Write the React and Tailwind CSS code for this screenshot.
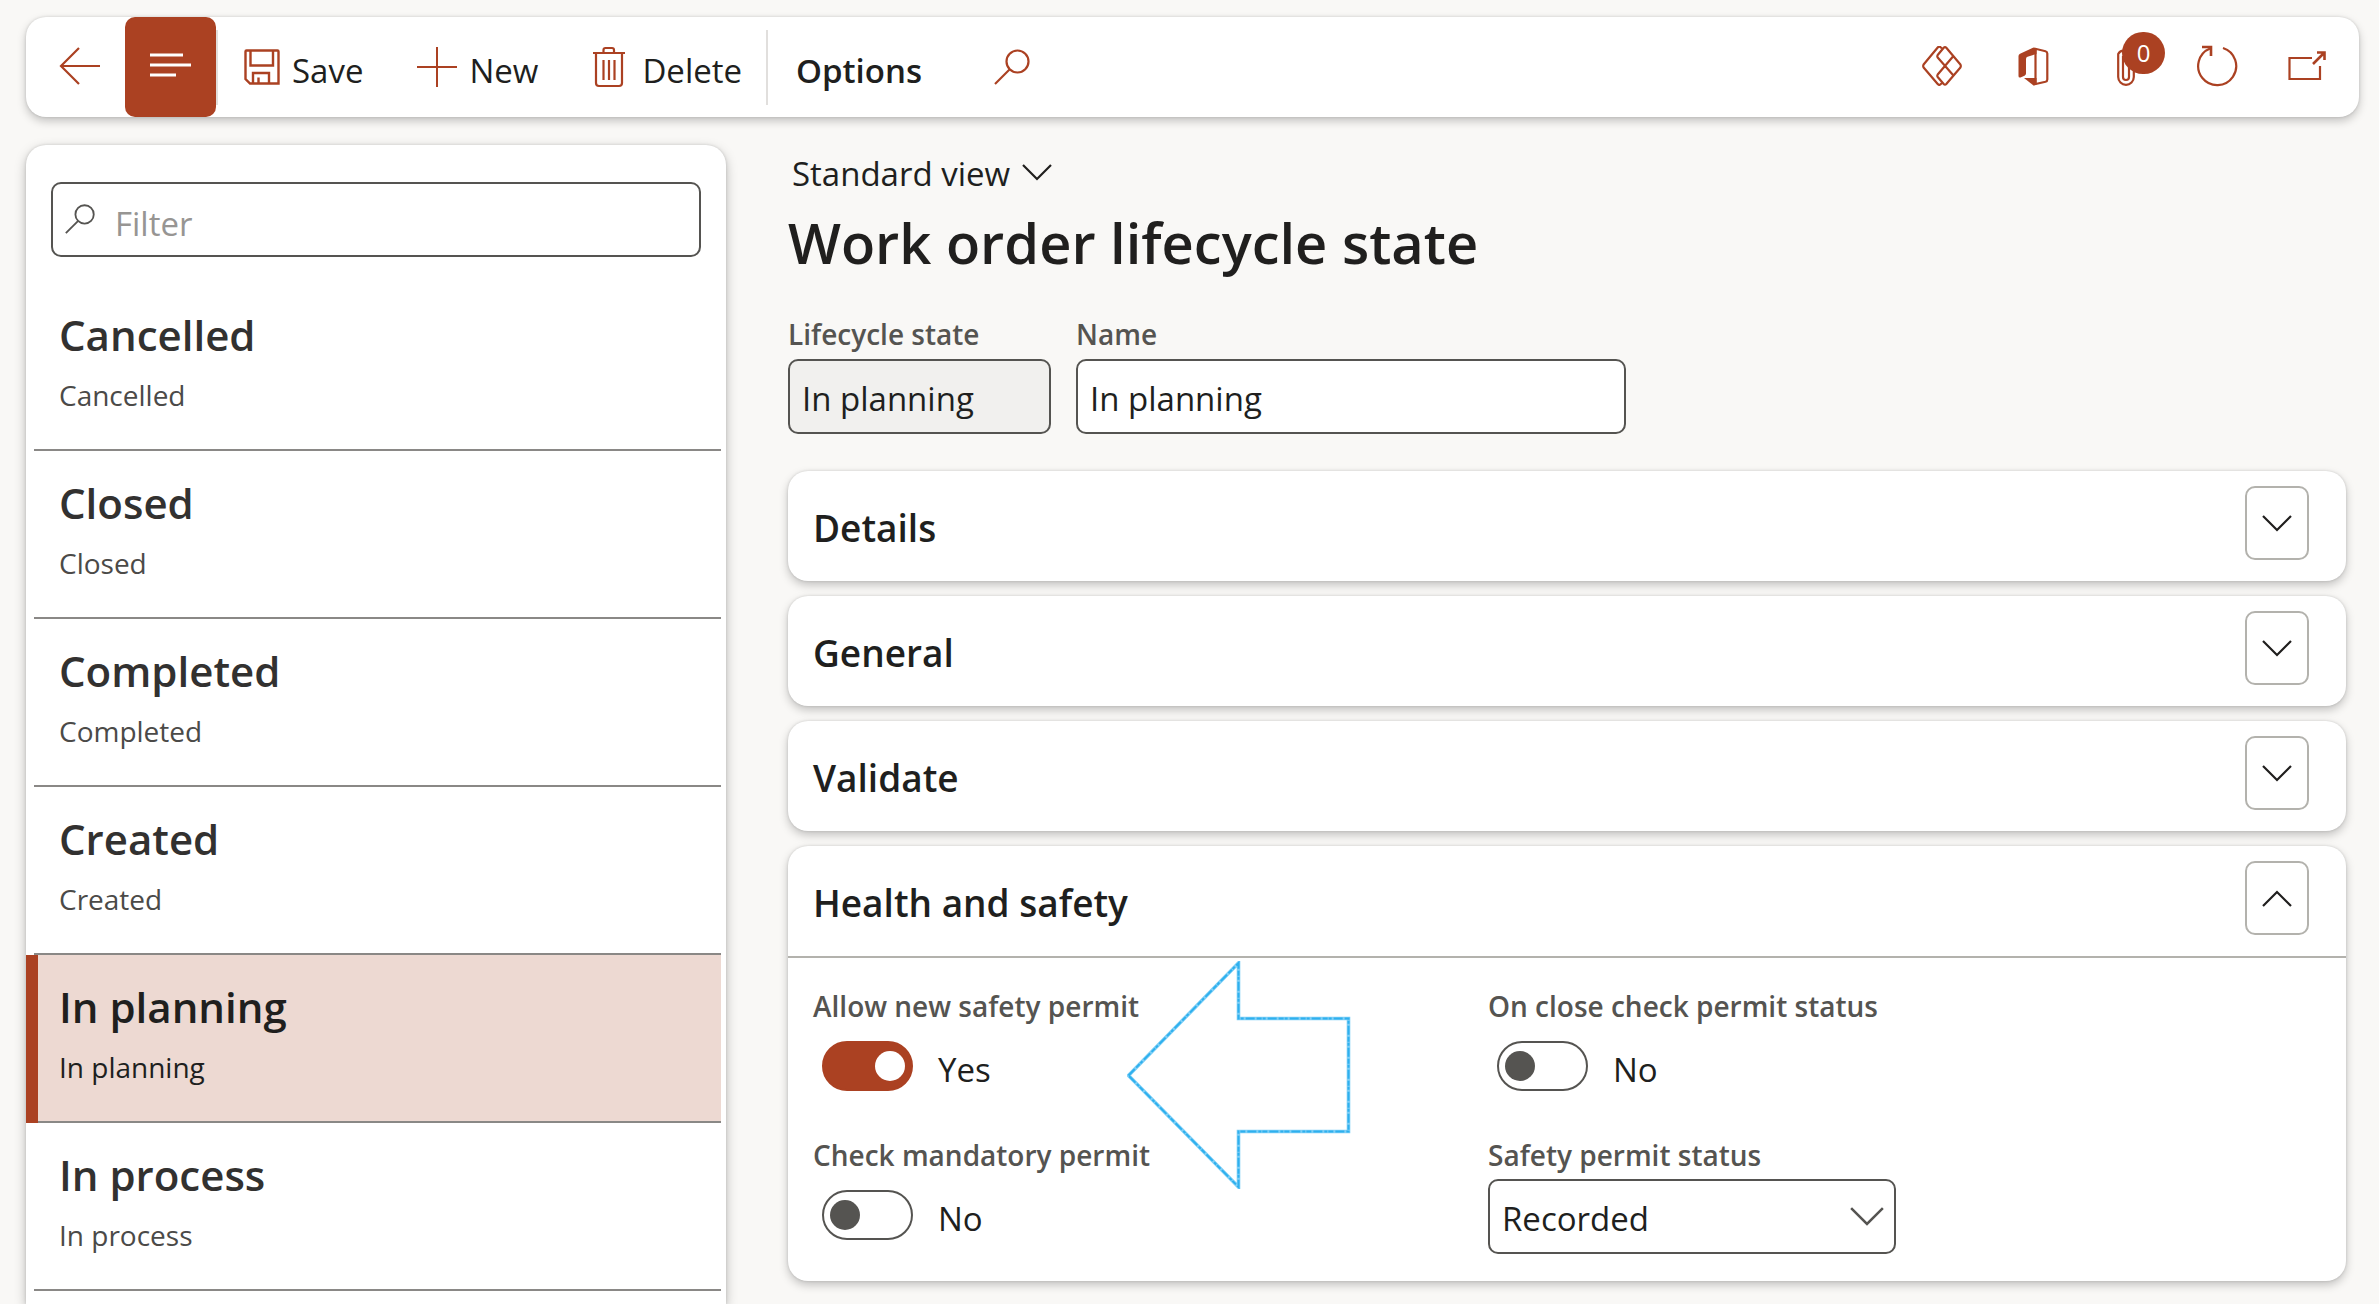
import { useState } from "react";

const ICON = "stroke-[#ab4122] fill-none";

function BackIcon() {
  return (
    <svg width="42" height="40" viewBox="0 0 42 40" className={ICON} strokeWidth="2.2">
      <path d="M20 2 2 20 20 38M2 20H41" />
    </svg>
  );
}

function MenuIcon() {
  return (
    <svg width="42" height="26" viewBox="0 0 42 26" className="fill-none stroke-white" strokeWidth="3">
      <path d="M1 3H34M1 13H42M1 23H27" />
    </svg>
  );
}

function SaveIcon() {
  return (
    <svg width="36" height="36" viewBox="0 0 36 36" className={ICON} strokeWidth="2.4">
      <path d="M1.500 2.500Q1.500 1.500 2.500 1.500H33.500Q34.500 1.500 34.500 2.500V34.500H6L1.500 30Z" />
      <path d="M6.500 2V16.500H29V2M9 34V24H25V34M14.500 34V28.500" />
    </svg>
  );
}

function PlusIcon() {
  return (
    <svg width="40" height="40" viewBox="0 0 40 40" className={ICON} strokeWidth="2">
      <path d="M20 0V40M0 20H40" />
    </svg>
  );
}

function TrashIcon() {
  return (
    <svg width="34" height="42" viewBox="0 0 34 42" className={ICON} strokeWidth="2.200">
      <path d="M1 7H33M11.500 7V4Q11.500 2 13.500 2H20Q22 2 22 4V7M4 7V37Q4 40 7 40H27Q30 40 30 37V7M11.500 14V34M17 14V34M22.500 14V34" />
    </svg>
  );
}

function SearchIcon({ className, size }) {
  return (
    <svg width={size} height={size} viewBox="0 0 36 36" className={className} strokeWidth="2.2">
      <circle cx="23.500" cy="12.500" r="11" />
      <path d="M15.500 20.500 1 35" />
    </svg>
  );
}

function ChevronDown({ className, width = 30 }) {
  return (
    <svg width={width} viewBox="0 0 30 17" className={className} strokeWidth="2.2">
      <path d="M1 1 15 15 29 1" />
    </svg>
  );
}

function DiamondsIcon() {
  return (
    <svg width="40" height="40" viewBox="0 0 40 40" className={ICON} strokeWidth="2.2" strokeLinejoin="round">
      <path d="M20 2.500 18.300 1Q17 .2 15.700 1.500L1.600 18.500Q.8 20 1.600 21.500L15.700 38Q17 39.500 18.300 38.500L20 37" />
      <path d="M21.700 1.800Q23 .4 24.300 1.800L38.400 18.500Q39.200 20 38.400 21.500L24.300 38Q23 39.400 21.700 38L15.700 31Q14.900 29.700 15.700 28.500L31 10.500M31 29 15.700 11.500Q14.900 10.300 15.700 9L21.700 1.800" />
    </svg>
  );
}

function OfficeIcon() {
  return (
    <svg width="31" height="39" viewBox="0 0 31 39">
      <path className="fill-[#ab4122]" d="M15.500 .5 18.500 1.500V7L9.500 9.700Q8 10.200 8 12V26.500Q8 28 6.500 28.800L2.500 30.500Q.5 31 .5 29V9Q.5 7.500 2 6.800Z" />
      <path className="fill-[#ab4122]" d="M6 31H18.500V37.500L15.500 38.500Z" />
      <path className={ICON} strokeWidth="2.200" d="M17.500 37V1.800L27.500 4.200Q29.300 4.700 29.300 6.500V32.500Q29.300 34.300 27.500 34.800L15.500 37.500" />
    </svg>
  );
}

function PaperclipIcon() {
  return (
    <svg width="18" height="40" viewBox="0 0 18 40" className={ICON} strokeWidth="2.200">
      <path d="M16.800 12V31A7.800 7.800 0 0 1 1.200 31V8A6 6 0 0 1 12 8V31A3 3 0 0 1 6 31V10" />
    </svg>
  );
}

function RefreshIcon() {
  return (
    <svg width="42" height="42" viewBox="0 0 42 42" className={ICON} strokeWidth="2.2">
      <path d="M27 3A19 19 0 1 1 14 3.500" />
      <path d="M6 2H15V11" strokeWidth="2.600" />
    </svg>
  );
}

function PopoutIcon() {
  return (
    <svg width="38" height="30" viewBox="0 0 38 30" className={ICON} strokeWidth="2.200">
      <path d="M24 7H1.500V28H32V15" />
      <path d="M25 13 36 2M29 1.500H36.500V9" strokeWidth="2.600" />
    </svg>
  );
}

function ArrowCallout() {
  const outline = "M1.500 114.500 111.500 2V57.500H221.500V170.500H111.500V226Z";
  return (
    <svg width="224" height="228" viewBox="0 0 224 228" className="pointer-events-none absolute top-[3px] left-[339px] fill-none">
      <path d={outline} className="stroke-[#7fcff6]" strokeWidth="3.600" />
      <path d={outline} className="stroke-[#2eb0ee]" strokeWidth="2" strokeDasharray="9 2 5 1 3 2" />
    </svg>
  );
}

const STATES = ["Cancelled", "Closed", "Completed", "Created", "In planning", "In process"];

const BODY = "text-[33px] leading-[46px]";
const CARD = "rounded-[20px] bg-white shadow-[0_4px_10px_rgba(0,0,0,0.22),0_0_3px_rgba(0,0,0,0.14)]";
const FIELD = "h-[75px] rounded-[10px] border-2 border-[#555451] px-3 text-[33px] leading-[46px] text-[#201f1e]";
const LABEL = "text-[28px] leading-10 font-semibold text-[#555451]";

function Toggle({ id, label, initial }) {
  const [on, setOn] = useState(initial);
  return (
    <div className="h-[149px]">
      <label htmlFor={id} className={`block ${LABEL}`}>{label}</label>
      <div className="mt-[15px] flex h-[50px] items-center pl-[9px]">
        <span className="relative h-[50px] w-[91px]">
          <input
            id={id}
            type="checkbox"
            role="switch"
            checked={on}
            onChange={() => setOn(!on)}
            className="peer h-full w-full appearance-none rounded-full border-2 border-[#555451] bg-white checked:border-[#ab4122] checked:bg-[#ab4122]"
          />
          <span className="pointer-events-none absolute top-[10px] left-2 size-[30px] rounded-full bg-[#555451] peer-checked:left-[53px] peer-checked:bg-white" />
        </span>
        <span className={`ml-[25px] pt-2 ${BODY}`}>{on ? "Yes" : "No"}</span>
      </div>
    </div>
  );
}

function Section({ title, open = false, children }) {
  return (
    <section className={CARD}>
      <header className="flex h-[110px] items-center justify-between pr-[37px] pl-[25px]">
        <h2 className="pt-1 text-[37px] leading-[52px] font-semibold">{title}</h2>
        <button
          type="button"
          aria-expanded={open}
          aria-label={title}
          className="mb-1.5 flex h-[74px] w-16 items-center justify-center rounded-[10px] border-2 border-[#b3b2ad]"
        >
          <ChevronDown className={open ? "rotate-180 fill-none stroke-[#201f1e]" : "fill-none stroke-[#201f1e]"} />
        </button>
      </header>
      {children}
    </section>
  );
}

export default function App() {
  return (
    <div className="flex h-screen flex-col overflow-hidden bg-[#f9f8f6] pt-[17px] font-['Open_Sans',sans-serif] text-[#201f1e]">
      <div className={`mr-5 ml-[26px] flex h-[100px] shrink-0 items-center ${CARD}`}>
        <button type="button" aria-label="Back" className="flex w-[99px] justify-center pb-0.5 pl-2"><BackIcon /></button>
        <button type="button" aria-label="Show list" className="flex h-full w-[91px] items-center justify-center rounded-[10px] bg-[#ab4122] pr-0.5 pb-1"><MenuIcon /></button>
        <div className="h-[75px] w-0.5 bg-[#e1dfdd]" />
        <button type="button" className={`ml-[26px] flex items-center gap-3 ${BODY}`}><SaveIcon /><span className="pt-2">Save</span></button>
        <button type="button" className={`ml-[54px] flex items-center gap-3 ${BODY}`}><PlusIcon /><span className="pt-2">New</span></button>
        <button type="button" className={`ml-[54px] flex items-center gap-4 ${BODY}`}><TrashIcon /><span className="pt-2">Delete</span></button>
        <div className="ml-6 h-[75px] w-0.5 bg-[#e1dfdd]" />
        <button type="button" className={`ml-7 pt-2 font-semibold ${BODY}`}>Options</button>
        <button type="button" aria-label="Search" className="ml-[72px]"><SearchIcon size={36} className={ICON} /></button>
        <div className="ml-auto flex items-center pr-[33px] pb-0.5">
          <button type="button" aria-label="Power Apps" className="mr-14"><DiamondsIcon /></button>
          <button type="button" aria-label="Open in Office" className="mr-[68px]"><OfficeIcon /></button>
          <button type="button" aria-label="Attachments" className="relative mr-[61px]">
            <PaperclipIcon />
            <span className="absolute -top-[14px] left-[5px] flex h-[42px] w-[43px] items-center justify-center rounded-full bg-[#ab4122] text-2xl text-white">0</span>
          </button>
          <button type="button" aria-label="Refresh" className="mr-[50px]"><RefreshIcon /></button>
          <button type="button" aria-label="Open in new window"><PopoutIcon /></button>
        </div>
      </div>

      <div className="mt-7 flex min-h-0 flex-1">
        <aside className="ml-[26px] w-[700px] shrink-0 rounded-t-[20px] bg-white shadow-[0_4px_12px_rgba(0,0,0,0.26),0_0_3px_rgba(0,0,0,0.14)]">
          <label className="mx-[25px] mt-[37px] flex h-[75px] items-center rounded-[10px] border-2 border-[#555451] pl-3">
            <SearchIcon size={30} className="mb-0.5 fill-none stroke-[#555451]" />
            <input aria-label="Filter" placeholder="Filter" className={`ml-5 min-w-0 flex-1 pt-2 outline-none placeholder:text-[#979593] ${BODY}`} />
          </label>
          <ul className="mt-[26px]">
            {STATES.map((name) => {
              const selected = name === "In planning";
              return (
                <li
                  key={name}
                  className={
                    selected
                      ? "mr-[5px] border-l-[12px] border-[#ab4122] bg-[#edd9d2] pl-[21px] text-[#201f1e]"
                      : "mr-[5px] pl-[33px]"
                  }
                >
                  <a href="#" className="relative block h-[168px] pt-[22px]">
                    <span className={selected ? "block text-[42px] leading-[60px] font-semibold" : "block text-[42px] leading-[60px] font-semibold text-[#323130]"}>{name}</span>
                    <span className={selected ? "mt-2.5 block text-[28px] leading-10" : "mt-2.5 block text-[28px] leading-10 text-[#4b4a48]"}>{name}</span>
                    <span className={selected ? "absolute right-0 bottom-0 -left-[21px] h-0.5 bg-[#8a8886]" : "absolute right-0 bottom-0 -left-[25px] h-0.5 bg-[#8a8886]"} />
                  </a>
                </li>
              );
            })}
          </ul>
        </aside>

        <main className="ml-[62px] min-w-0 flex-1 pr-[33px]">
          <button type="button" className={`mt-[6px] ml-1 flex items-center gap-3 ${BODY}`}>
            Standard view
            <ChevronDown className="mb-1 fill-none stroke-[#201f1e]" />
          </button>
          <h1 className="text-[56px] leading-[90px] font-semibold">Work order lifecycle state</h1>
          <div className="mt-[27px] flex gap-[25px]">
            <div className="w-[263px]">
              <label htmlFor="state" className={`block ${LABEL}`}>Lifecycle state</label>
              <input id="state" readOnly defaultValue="In planning" className={`mt-[5px] w-full bg-[#f1f0ee] pt-1 ${FIELD}`} />
            </div>
            <div className="w-[550px]">
              <label htmlFor="name" className={`block ${LABEL}`}>Name</label>
              <input id="name" defaultValue="In planning" className={`mt-[5px] w-full bg-white pt-1 ${FIELD}`} />
            </div>
          </div>
          <div className="mt-[37px] flex flex-col gap-[15px]">
            <Section title="Details" />
            <Section title="General" />
            <Section title="Validate" />
            <Section title="Health and safety" open>
              <div className="relative grid h-[325px] grid-cols-[675px_1fr] border-t-2 border-[#b3b2ad] pt-[28px] pl-[25px]">
                <div>
                  <Toggle id="allow" label="Allow new safety permit" initial />
                  <Toggle id="mandatory" label="Check mandatory permit" initial={false} />
                </div>
                <div>
                  <Toggle id="close" label="On close check permit status" initial={false} />
                  <label htmlFor="status" className={`block ${LABEL}`}>Safety permit status</label>
                  <div className="relative mt-1 w-[408px]">
                    <select id="status" className={`w-full appearance-none bg-white pt-1 ${FIELD}`}>
                      <option>Recorded</option>
                    </select>
                    <ChevronDown width={34} className="pointer-events-none absolute top-7 right-3 fill-none stroke-[#555451]" />
                  </div>
                </div>
                <ArrowCallout />
              </div>
            </Section>
          </div>
        </main>
      </div>
    </div>
  );
}
